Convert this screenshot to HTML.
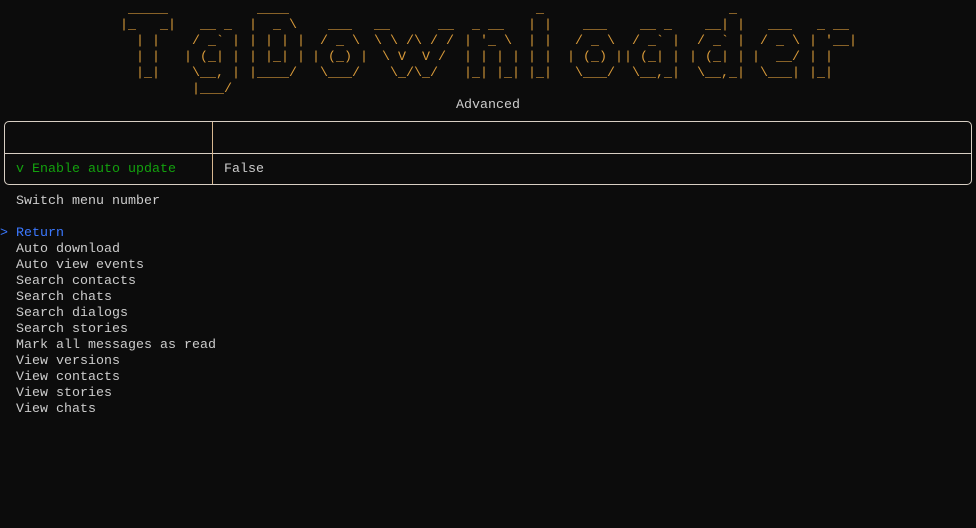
<!DOCTYPE html>
<html><head><style>
html,body{margin:0;padding:0;background:#0c0c0c;width:976px;height:528px;overflow:hidden}
*{font-family:"Liberation Mono",monospace;font-size:13.333px;line-height:16px}
pre{margin:0;position:absolute;white-space:pre}
.art{color:#d89a3a;top:2px}
.a2{top:18px}
.t{color:#cccccc}
.box{position:absolute;left:4px;top:121px;width:966px;height:62px;border:1px solid #d8cfc4;border-radius:5px}
.h{position:absolute;left:0;right:0;top:31px;height:1px;background:#d8cfc4}
.v{position:absolute;left:207px;top:0;bottom:0;width:1px;background:#d8b890}
</style></head><body>
<pre class="art" style="left:120px"> _____ 
|_   _|
  | |  
  | |  
  |_|  </pre>
<pre class="art a2" style="left:184px">  __ _ 
 / _` |
| (_| |
 \__, |
 |___/ </pre>
<pre class="art" style="left:249px"> ____  
|  _ \ 
| | | |
| |_| |
|____/ </pre>
<pre class="art a2" style="left:312px">  ___  
 / _ \ 
| (_) |
 \___/ </pre>
<pre class="art a2" style="left:374px">__      __
\ \ /\ / /
 \ V  V / 
  \_/\_/  </pre>
<pre class="art a2" style="left:464px"> _ __  
| '_ \ 
| | | |
|_| |_|</pre>
<pre class="art" style="left:528px"> _ 
| |
| |
| |
|_|</pre>
<pre class="art a2" style="left:567px">  ___  
 / _ \ 
| (_) |
 \___/ </pre>
<pre class="art a2" style="left:624px">  __ _ 
 / _` |
| (_| |
 \__,_|</pre>
<pre class="art" style="left:689px">     _ 
  __| |
 / _` |
| (_| |
 \__,_|</pre>
<pre class="art a2" style="left:752px">  ___ 
 / _ \
|  __/
 \___|</pre>
<pre class="art a2" style="left:809px"> _ __ 
| '__|
| |   
|_|   </pre>
<pre class="t" style="left:456px;top:98px">Advanced</pre>
<div class="box"><div class="h"></div><div class="v"></div></div>
<pre style="left:16px;top:162px;color:#13a10e">v Enable auto update</pre>
<pre class="t" style="left:224px;top:162px">False</pre>
<pre class="t" style="left:0;top:194px">  Switch menu number

<span style="color:#3b78ff">&gt; Return</span>
  Auto download
  Auto view events
  Search contacts
  Search chats
  Search dialogs
  Search stories
  Mark all messages as read
  View versions
  View contacts
  View stories
  View chats</pre>
</body></html>
